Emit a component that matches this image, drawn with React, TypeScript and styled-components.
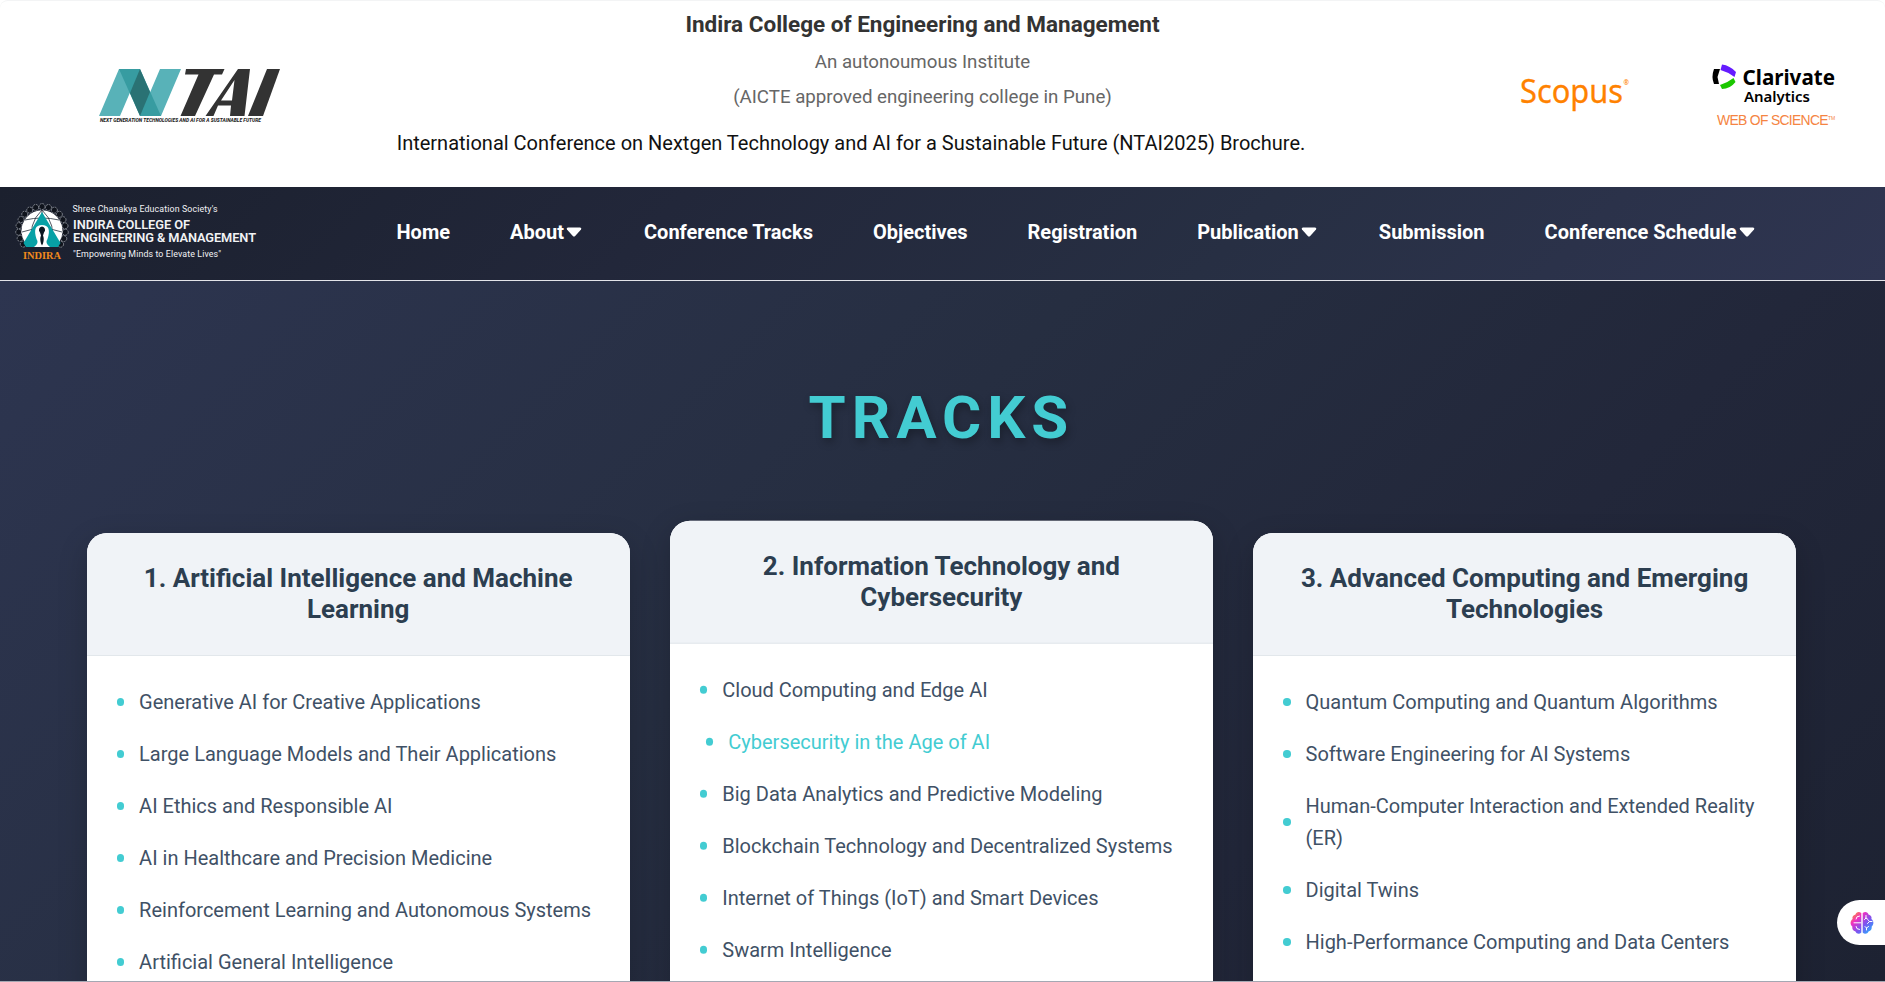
import React from "react";
import styled, { createGlobalStyle } from "styled-components";

const Global = createGlobalStyle`
  * { box-sizing: border-box; }
  html, body { margin: 0; padding: 0; }
  body { height: 982px; overflow: hidden; background: #fff; font-family: Roboto, sans-serif; }
`;

const Page = styled.div`
  height: 982px;
  display: flex;
  flex-direction: column;
  overflow: hidden;
  border-bottom: 1px solid #a5a8b3;
`;

const Masthead = styled.header`
  height: 187px;
  flex: none;
  display: grid;
  grid-template-columns: 380px 1fr 365px;
  background: #fff;
  border-top: 1px solid #f3f4f5;
  border-radius: 8px 8px 0 0;
`;

const BrandSlot = styled.div`
  padding: 64px 0 0 96px;
`;

const Intro = styled.div`
  display: flex;
  flex-direction: column;
  align-items: center;
  width: 943px;
  padding-top: 8px;
  text-align: center;
`;

const College = styled.h1`
  margin: 0 0 8px;
  padding-left: 142px;
  font-size: 22.5px;
  line-height: 30px;
  font-weight: 700;
  color: #333;
`;

const Tagline = styled.p`
  margin: 0 0 5px;
  padding-left: 142px;
  font-size: 18.72px;
  line-height: 30px;
  color: #666;
`;

const Brochure = styled.p`
  margin: 10px 1px 0 0;
  font-size: 20px;
  line-height: 32px;
  color: #111;
  white-space: nowrap;
`;

const Indexers = styled.div`
  display: flex;
  align-items: flex-start;
`;

const Nav = styled.nav`
  height: 94px;
  flex: none;
  display: flex;
  align-items: center;
  background: linear-gradient(135deg, #1b202e, #22273a 35%, #272f43 65%, #2f3551);
  border-bottom: 1px solid #e3e4e9;
`;

const NavBrand = styled.div`
  width: 396.5px;
  flex: none;
  padding: 1px 0 0 14px;
`;

const Menu = styled.ul`
  display: flex;
  gap: 60px;
  margin: 0;
  padding: 0 0 3px;
  list-style: none;
`;

const MenuItem = styled.li<{ $more?: boolean }>`
  display: flex;
  align-items: center;
  gap: 2px;
  padding-right: ${(p) => (p.$more ? "2px" : "0")};
  color: #fff;
  font-size: 20px;
  font-weight: 700;
  line-height: 24px;
  white-space: nowrap;
`;

const Main = styled.main`
  flex: 1;
  min-height: 0;
  background: linear-gradient(135deg, #2d3550, #262e41 42%, #22273a 70%, #1d2232);
  padding: 97px 88.8px 0 86.6px;
`;

const Heading = styled.h2`
  margin: 0;
  height: 155px;
  padding-top: 4px;
  text-align: center;
  color: #43ccd2;
  font-size: 60px;
  line-height: 72px;
  font-weight: 700;
  letter-spacing: 6px;
  text-shadow: 2px 4px 8px rgba(0, 0, 0, 0.3);
`;

const Grid = styled.div`
  display: grid;
  grid-template-columns: repeat(3, 1fr);
  gap: 40px;
  align-items: start;
`;

const Card = styled.section<{ $raised?: boolean }>`
  height: 560px;
  background: #fff;
  border-radius: 20px;
  overflow: hidden;
  box-shadow: 0 10px 30px rgba(0, 0, 0, 0.2);
  transform: ${(p) => (p.$raised ? "translateY(-12.3px)" : "none")};
`;

const CardTitle = styled.h3`
  margin: 0;
  height: 123px;
  padding: 30px;
  background: #f0f3f7;
  border-bottom: 1px solid #e2e7eb;
  color: #2c3e50;
  font-size: 26px;
  line-height: 31px;
  font-weight: 700;
  text-align: center;
`;

const Topics = styled.ul`
  margin: 0;
  padding: 30px;
  list-style: none;
`;

const Topic = styled.li<{ $active?: boolean }>`
  display: flex;
  align-items: center;
  gap: 15px;
  margin-bottom: 20px;
  color: ${(p) => (p.$active ? "#43ccd2" : "#3f5166")};
  font-size: 20px;
  line-height: 32px;
  transform: ${(p) => (p.$active ? "translateX(6px)" : "none")};

  &::before {
    content: "";
    flex: none;
    width: 7.5px;
    height: 7.5px;
    border-radius: 50%;
    background: #43ccd2;
  }
`;

const Assistant = styled.button`
  position: fixed;
  right: 0;
  top: 900px;
  width: 48px;
  height: 45px;
  padding: 0 0 0 13px;
  display: flex;
  align-items: center;
  border: 0;
  border-radius: 23px 0 0 23px;
  background: #fff;
`;

const Caret = () => (
  <svg width="16" height="10" viewBox="0 0 16 10">
    <path d="M1.8 0.5H14.2Q16 1 15 2.6L9.2 9Q8 10 6.8 9L1 2.6Q0 1 1.8 0.5Z" fill="#fff" />
  </svg>
);

const NtaiLogo = () => (
  <svg width="190" height="62" viewBox="0 0 190 62">
    <path d="M23 4H44L24 51H3Z M64 4H85L65 51H44Z" fill="#58b2b8" />
    <path d="M23 4H44L65 51H44Z" fill="#379ca1" />
    <path d="M44 4L54 27L44 51L34 28Z" fill="#2a7274" />
    <path d="M90 4H128.500L126 9.500H118L99 51H84.500L102.500 9.500H89Z" fill="#333" />
    <path fillRule="evenodd" d="M142 4H154L148.500 51H134L135 40.500H122L117.500 51H109.500Z M138.500 15L125 35.500H136Z" fill="#333" />
    <path d="M171 4H184L167 51H152Z" fill="#333" />
    <text x="4" y="57" fontSize="4.6" fontWeight="800" fontStyle="italic" fontFamily="Roboto, sans-serif" fill="#222" textLength="161" lengthAdjust="spacingAndGlyphs">
      NEXT GENERATION TECHNOLOGIES AND AI FOR A SUSTAINABLE FUTURE
    </text>
  </svg>
);

const IndexerLogos = () => (
  <svg width="365" height="140" viewBox="1520 0 365 140">
    <g fontFamily="'Noto Sans', sans-serif">
      <text x="1520" y="101.500" fontSize="32" fill="#ff8200" stroke="#ff8200" strokeWidth="0.3" textLength="103" lengthAdjust="spacingAndGlyphs">Scopus</text>
      <text x="1623.500" y="84" fontSize="6.500" fontWeight="700" fill="#ff8200">®</text>
      <text x="1742.500" y="84" fontSize="21" fontWeight="700" fill="#000" textLength="92.500" lengthAdjust="spacingAndGlyphs">Clarivate</text>
      <text x="1744" y="100.500" fontSize="15" fontWeight="600" fill="#000" textLength="66" lengthAdjust="spacingAndGlyphs">Analytics</text>
    </g>
    <text x="1717" y="124" fontSize="13.9" fontFamily="'Liberation Sans', sans-serif" fill="#f58442" letterSpacing="-0.68">
      WEB OF SCIENCE<tspan fontSize="5" dy="-5" letterSpacing="0">TM</tspan>
    </text>
    <path d="M1714 68H1720L1717.500 76L1719 83H1714Q1711 76 1714 68Z" fill="#000" />
    <path d="M1722 63.500Q1730 64.500 1736 71L1734.500 76Q1728 71 1720.500 69Z" fill="#641bff" />
    <path d="M1733.500 77L1735.500 81Q1730 88 1722 88L1720 84Q1727 82 1733.500 77Z" fill="#1bc700" />
  </svg>
);

const rosettes = Array.from({ length: 17 }, (_, i) => {
  const angle = ((-217 + i * 15.9) * Math.PI) / 180;
  return { x: 42 + 23.4 * Math.cos(angle), y: 231 + 23.4 * Math.sin(angle) };
});

const IndiraLogo = () => (
  <svg width="250" height="60" viewBox="14 203 250 60">
    {rosettes.map((r, i) => (
      <circle key={i} cx={r.x} cy={r.y} r="3" fill="#0f131c" stroke="#8d929b" strokeWidth="0.9" strokeDasharray="2 0.8" />
    ))}
    <path d="M29.500 248A20.500 20.500 0 1 1 54.500 248Z" fill="#fff" />
    <g fill="none" stroke="#26303b" strokeWidth="0.8">
      <path d="M33 247Q27 225 42 211Q57 225 51 247" />
      <path d="M22 233Q42 226 62 233M25 221Q42 217 59 221M42 211V225" />
    </g>
    <path d="M42 213L60.500 244L58 248H26L23.500 244Z" fill="#08a1a6" />
    <path d="M34 248Q39.500 244 36.500 240Q32 226 42 226Q52 226 47.500 240Q44.500 244 50 248Z" fill="#fff" />
    <path d="M42 227.500a3.500 3.500 0 0 1 2 6l-1 3q1.500 3 0 8l-1 2l-1-2q-1.500-5 0-8l-1-3a3.500 3.500 0 0 1 2-6Z" fill="#0c1720" />
    <text x="23" y="259.500" fontSize="10" fontWeight="700" fontFamily="'Liberation Serif', serif" fill="#f18a1c" textLength="38" lengthAdjust="spacingAndGlyphs">INDIRA</text>
    <g fontFamily="Roboto, sans-serif" fill="#f2f3f5">
      <text x="72.500" y="213" fontSize="8.800" textLength="145">Shree Chanakya Education Society's</text>
      <text x="73" y="229.500" fontSize="12.800" fontWeight="600" textLength="117">INDIRA COLLEGE OF</text>
      <text x="73" y="243" fontSize="12.800" fontWeight="600" textLength="183">ENGINEERING &amp; MANAGEMENT</text>
      <text x="73" y="258" fontSize="8.800" textLength="148">"Empowering Minds to Elevate Lives"</text>
    </g>
  </svg>
);

const Brain = () => (
  <svg width="24" height="24" viewBox="0 0 24 24">
    <defs>
      <linearGradient id="brain" x1="0" y1="0" x2="1" y2="1">
        <stop offset="0.05" stopColor="#ff9a1f" />
        <stop offset="0.3" stopColor="#f02fc2" />
        <stop offset="0.6" stopColor="#7a55f0" />
        <stop offset="0.95" stopColor="#22b5ff" />
      </linearGradient>
    </defs>
    <path d="M11.300 2C9 0 6 1 5.500 3.500C3 4 2 6 2.600 8C0 10 0 13.500 2.300 15.500C2 18 3 20 5.500 20.500C6.500 23 9.500 23.500 11.300 21.500Z M12.700 2C15 0 18 1 18.500 3.500C21 4 22 6 21.400 8C24 10 24 13.500 21.700 15.500C22 18 21 20 18.500 20.500C17.500 23 14.500 23.500 12.700 21.500Z" fill="url(#brain)" />
    <g fill="none" stroke="#fff" strokeWidth="1" strokeLinecap="round">
      <path d="M11 11.800H4M9.500 5Q6 5 6 8M9.500 18.500Q6 18.500 6 15.500M16 4.500V7L14.500 8.500M16 7L18 8.500M22 10.500H19.500L17.500 12.500M19.500 10.500L18.500 9.500M15 15.500L16.500 17L18.500 15.500M16.500 17V19" />
    </g>
  </svg>
);

const menu: { label: string; more?: boolean }[] = [
  { label: "Home" },
  { label: "About", more: true },
  { label: "Conference Tracks" },
  { label: "Objectives" },
  { label: "Registration" },
  { label: "Publication", more: true },
  { label: "Submission" },
  { label: "Conference Schedule", more: true },
];

const tracks = [
  {
    title: "1. Artificial Intelligence and Machine Learning",
    topics: [
      "Generative AI for Creative Applications",
      "Large Language Models and Their Applications",
      "AI Ethics and Responsible AI",
      "AI in Healthcare and Precision Medicine",
      "Reinforcement Learning and Autonomous Systems",
      "Artificial General Intelligence",
    ],
  },
  {
    title: "2. Information Technology and Cybersecurity",
    raised: true,
    topics: [
      "Cloud Computing and Edge AI",
      "Cybersecurity in the Age of AI",
      "Big Data Analytics and Predictive Modeling",
      "Blockchain Technology and Decentralized Systems",
      "Internet of Things (IoT) and Smart Devices",
      "Swarm Intelligence",
    ],
  },
  {
    title: "3. Advanced Computing and Emerging Technologies",
    topics: [
      "Quantum Computing and Quantum Algorithms",
      "Software Engineering for AI Systems",
      "Human-Computer Interaction and Extended Reality (ER)",
      "Digital Twins",
      "High-Performance Computing and Data Centers",
    ],
  },
];

export default function App() {
  return (
    <Page>
      <Global />
      <Masthead>
        <BrandSlot><NtaiLogo /></BrandSlot>
        <Intro>
          <College>Indira College of Engineering and Management</College>
          <Tagline>An autonoumous Institute</Tagline>
          <Tagline>(AICTE approved engineering college in Pune)</Tagline>
          <Brochure>International Conference on Nextgen Technology and AI for a Sustainable Future (NTAI2025) Brochure.</Brochure>
        </Intro>
        <Indexers><IndexerLogos /></Indexers>
      </Masthead>
      <Nav>
        <NavBrand><IndiraLogo /></NavBrand>
        <Menu>
          {menu.map((m) => (
            <MenuItem key={m.label} $more={m.more}>{m.label}{m.more && <Caret />}</MenuItem>
          ))}
        </Menu>
      </Nav>
      <Main>
        <Heading>TRACKS</Heading>
        <Grid>
          {tracks.map((t) => (
            <Card key={t.title} $raised={t.raised}>
              <CardTitle>{t.title}</CardTitle>
              <Topics>
                {t.topics.map((x) => (
                  <Topic key={x} $active={x.startsWith("Cybersecurity")}>{x}</Topic>
                ))}
              </Topics>
            </Card>
          ))}
        </Grid>
      </Main>
      <Assistant aria-label="Assistant"><Brain /></Assistant>
    </Page>
  );
}
